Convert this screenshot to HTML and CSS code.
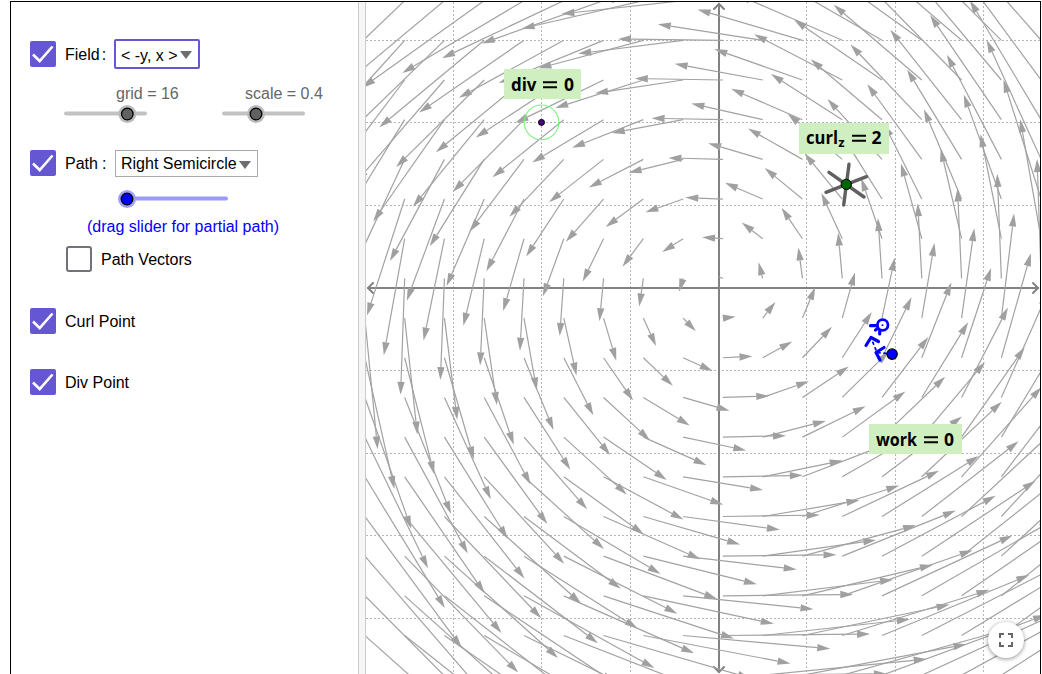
FILE: index.html
```html
<!DOCTYPE html>
<html lang="en">
<head>
<meta charset="utf-8">
<title>Vector Field</title>
<link rel="stylesheet" href="styles.css">
</head>
<body>
<main class="applet">
  <section class="panel">
    <div class="row field-row">
      <svg class="check" viewBox="0 0 26 26"><rect width="26" height="26" rx="2"/><path d="M3 13.5L9.7 20L22.5 5.5"/></svg>
      <span class="label field-label">Field<i>:</i></span>
      <div class="select focused"><span class="field-value">&lt; -y, x &gt;</span><b class="caret"></b></div>
    </div>
    <div class="row sliders">
      <div class="slider-box grid-box">
        <span>grid = 16</span>
        <svg width="84" height="20"><path class="track" d="M2 9.5H81"/><circle class="halo" cx="63.3" cy="10" r="9"/><circle class="knob" cx="63.3" cy="10" r="5.8"/></svg>
      </div>
      <div class="slider-box scale-box">
        <span>scale = 0.4</span>
        <svg width="84" height="20"><path class="track" d="M2 9.5H81"/><circle class="halo" cx="34" cy="10" r="9"/><circle class="knob" cx="34" cy="10" r="5.8"/></svg>
      </div>
    </div>
    <div class="row path-row">
      <svg class="check" viewBox="0 0 26 26"><rect width="26" height="26" rx="2"/><path d="M3 13.5L9.7 20L22.5 5.5"/></svg>
      <span class="label path-label">Path<i>:</i></span>
      <div class="select"><span class="path-value">Right Semicircle</span><b class="caret"></b></div>
    </div>
    <svg class="path-slider blue" width="112" height="20"><path class="track" d="M9 9.5H108"/><circle class="halo" cx="9" cy="10" r="9"/><circle class="knob" cx="9" cy="10" r="5.8"/></svg>
    <p class="hint">(drag slider for partial path)</p>
    <div class="row vectors-row"><span class="box"></span><span class="label">Path Vectors</span></div>
    <div class="row curl-row">
      <svg class="check" viewBox="0 0 26 26"><rect width="26" height="26" rx="2"/><path d="M3 13.5L9.7 20L22.5 5.5"/></svg>
      <span class="label">Curl Point</span>
    </div>
    <div class="row div-row">
      <svg class="check" viewBox="0 0 26 26"><rect width="26" height="26" rx="2"/><path d="M3 13.5L9.7 20L22.5 5.5"/></svg>
      <span class="label">Div Point</span>
    </div>
  </section>
  <div class="splitter"></div>
  <section class="plot">
    <svg class="graph" viewBox="366 2 674 672">
      <g class="gridlines">
        <path d="M453.5 2V674M541.5 2V674M630.5 2V674M806.5 2V674M895.5 2V674M983.5 2V674"/>
        <path d="M366 40.5H1040M366 122.5H1040M366 205.5H1040M366 370.5H1040M366 453.5H1040M366 535.5H1040M366 618.5H1040"/>
      </g>
      <g class="axes">
        <path d="M368 288H1038M719 4V672"/>
        <path d="M373 283L368 288L373 293M1033 283L1038 288L1033 293M714 9L719 4L724 9M714 667L719 672L724 667"/>
      </g>
      <g id="vectors" class="vectors"></g>

      <circle class="div-ring" cx="541.5" cy="122.3" r="17.3"/>
      <circle class="div-dot" cx="541.5" cy="122.4" r="3"/>

      <path class="paddle" d="M849 164.3L843.7 205M866.5 176.7L826 192.3M829 172.3L864 197"/>
      <circle class="curl-dot" cx="846.3" cy="184.4" r="5.2"/>

      <g class="semi">
        <path d="M870.5 325.7H880L879.7 334M880 327L875.5 330M866 345.5L871 337.5L878.5 341.5M884 347.5L876 352.5L880 360"/>
        <path class="dashes" d="M892 354L877 352.5L871.5 339"/>
        <circle class="end" cx="882.7" cy="325" r="5.3"/>
        <circle class="mid" cx="882.5" cy="325.3" r="1"/>
        <circle class="start" cx="892.1" cy="354.1" r="5.2"/>
      </g>

      <g class="tags">
        <rect x="504" y="69" width="77" height="30"/>
        <rect x="799" y="123" width="90" height="31"/>
        <rect x="869" y="424" width="93" height="30"/>
        <text x="511" y="90.7" textLength="25.5" lengthAdjust="spacingAndGlyphs">div</text><path d="M543 82.3H557M543 87.3H557"/><text x="564" y="90.7" textLength="10" lengthAdjust="spacingAndGlyphs">0</text>
        <text x="806" y="144" textLength="32" lengthAdjust="spacingAndGlyphs">curl</text><text class="sub" x="838.3" y="146.5">z</text><path d="M852 135.8H866M852 140.8H866"/><text x="871.5" y="144" textLength="10" lengthAdjust="spacingAndGlyphs">2</text>
        <text x="876" y="445.7" textLength="41" lengthAdjust="spacingAndGlyphs">work</text><path d="M924 437.3H938M924 442.3H938"/><text x="944" y="445.7" textLength="10" lengthAdjust="spacingAndGlyphs">0</text>
      </g>
    </svg>
    <button class="fullscreen" aria-label="Full screen"><svg width="14" height="14" viewBox="0 0 14 14"><path d="M1 5V1H5M9 1H13V5M13 9V13H9M5 13H1V9"/></svg></button>
  </section>
</main>
<script src="field.js"></script>
</body>
</html>
```
FILE: styles.css
```css
* { box-sizing: border-box; }
body { margin: 0; background: #fff; font: 16px/20px "Liberation Sans", Arial, sans-serif; color: #000; overflow: hidden; }
.applet { display: flex; width: 1031px; height: 673px; margin: 1px 0 0 10px; border: 1px solid #000; border-bottom: 0; }
.panel { width: 347px; flex: none; padding: 37px 0 0 19px; }
.splitter { width: 8px; flex: none; background: #f6f6f6; border-left: 1px solid #ccc; border-right: 1px solid #ccc; }
.plot { position: relative; width: 674px; height: 672px; overflow: hidden; }
.row { display: flex; align-items: center; }
.check { width: 26px; height: 26px; flex: none; }
.check rect { fill: #6557d2; }
.check path { fill: none; stroke: #fff; stroke-width: 2.6; }
.label { margin-left: 9px; padding-top: 2px; white-space: nowrap; }
.label i { font-style: normal; }
.field-row { height: 30px; }
.field-label, .path-label { display: flex; width: 49px; padding-top: 1px; }
.field-label i { margin-left: 2px; }
.path-label i { margin-left: 4px; }
.select { display: flex; align-items: center; height: 27px; border: 1px solid #aaa; padding: 2px 6px 0 5px; margin-left: 1px; white-space: nowrap; }
.select.focused { height: 30px; border: 2px solid #6557d2; border-radius: 2px; padding: 3px 5px 0; width: 86px; margin-left: 0; }
.path-row .select { width: 143px; }
.field-value { width: 59px; }
.path-value { width: 118px; }
.caret { border: 6px solid transparent; border-top: 8px solid #6c6c74; border-bottom: 0; flex: none; margin-top: 1px; }
.focused .caret { margin-top: -1px; }
.sliders { align-items: flex-start; height: 65px; padding: 15px 0 0 34px; color: #666; }
.slider-box { display: flex; flex-direction: column; width: 84px; white-space: nowrap; }
.slider-box svg { display: block; }
.grid-box span { padding-left: 52px; }
.scale-box { margin-left: 74px; }
.scale-box span { padding-left: 23px; }
.track { fill: none; stroke: #c2c2c2; stroke-width: 4; stroke-linecap: round; }
.halo { fill: #bbb; }
.knob { fill: #616161; stroke: #000; stroke-width: 1.3; }
.path-row { height: 28px; margin-top: 15px; }
.blue .track { stroke: #9999ff; }
.blue .halo { fill: #a0a0ff; }
.blue .knob { fill: #00f; }
.path-slider { display: block; margin: 12px 0 0 88px; }
.hint { color: #00f; margin: 8px 0 0 57px; white-space: nowrap; }
.vectors-row { height: 26px; margin: 9px 0 0 36px; }
.box { width: 26px; height: 26px; border: 2px solid #717177; border-radius: 3px; }
.curl-row { height: 26px; margin-top: 36px; }
.div-row { height: 26px; margin-top: 35px; }
.graph { display: block; width: 674px; height: 672px; }
.gridlines { stroke: #b5b5b5; stroke-dasharray: 2 2; fill: none; }
.axes { stroke: #828282; stroke-width: 2; fill: none; stroke-linecap: round; }
.vectors { stroke: #a2a2a2; stroke-width: 1.2; fill: #a0a0a0; }
.vectors polygon { stroke: none; }
.div-ring { fill: none; stroke: #7df57d; stroke-width: 1.1; }
.div-dot { fill: #4b0082; stroke: #000; }
.paddle { stroke: #606060; stroke-width: 3.4; stroke-linecap: round; }
.curl-dot { fill: #006400; stroke: #000; }
.semi path { fill: none; stroke: #00f; stroke-width: 3.2; stroke-linecap: round; stroke-linejoin: round; }
.semi .dashes { stroke-width: 1.8; stroke-dasharray: 2 4; }
.end { fill: #fff; stroke: #00f; stroke-width: 2.8; }
.mid { fill: #00f; }
.start { fill: #00f; stroke: #000; stroke-width: 1.2; }
.tags rect { fill: #d0efc0; }
.tags text { font: 700 18px "Open Sans", sans-serif; }
.tags text.sub { font-size: 13px; }
.tags path { stroke: #000; stroke-width: 1.9; }
.fullscreen { position: absolute; left: 622px; top: 620px; width: 36px; height: 36px; padding: 0; border: 0; border-radius: 50%; background: #fff; box-shadow: 0 1px 4px rgba(0,0,0,.45); display: flex; align-items: center; justify-content: center; }
.fullscreen path { fill: none; stroke: #666; stroke-width: 2; }
```
FILE: field.js
```js
// Draws the rotational field <-y, x> on an 18 x 18 lattice of tail points.
const group = document.getElementById("vectors");
const NS = "http://www.w3.org/2000/svg";
const ORIGIN = { x: 719, y: 288 };
const STEP_X = 39.78, STEP_Y = 39.68;
const HEAD = 13, HALF = 3.7;

function add(name, attrs) {
  const el = document.createElementNS(NS, name);
  for (const key in attrs) el.setAttribute(key, attrs[key]);
  group.appendChild(el);
}

for (let row = -7; row <= 10; row++) {
  for (let col = -9; col <= 8; col++) {
    const x = 722.9 + col * STEP_X;
    const y = 278.4 + row * STEP_Y;
    const dx = 0.4235 * (y - ORIGIN.y);
    const dy = -0.3705 * (x - ORIGIN.x);
    const len = Math.hypot(dx, dy);
    const ux = dx / len, uy = dy / len;
    const tx = x + dx, ty = y + dy;
    if (len < HEAD / 2) {
      add("line", { x1: x, y1: y, x2: tx, y2: ty });
      continue;
    }
    const head = Math.min(HEAD, len);
    const bx = tx - ux * head, by = ty - uy * head;
    add("line", { x1: x, y1: y, x2: bx, y2: by });
    add("polygon", {
      points: `${tx},${ty} ${bx - uy * HALF},${by + ux * HALF} ${bx + uy * HALF},${by - ux * HALF}`
    });
  }
}
```
